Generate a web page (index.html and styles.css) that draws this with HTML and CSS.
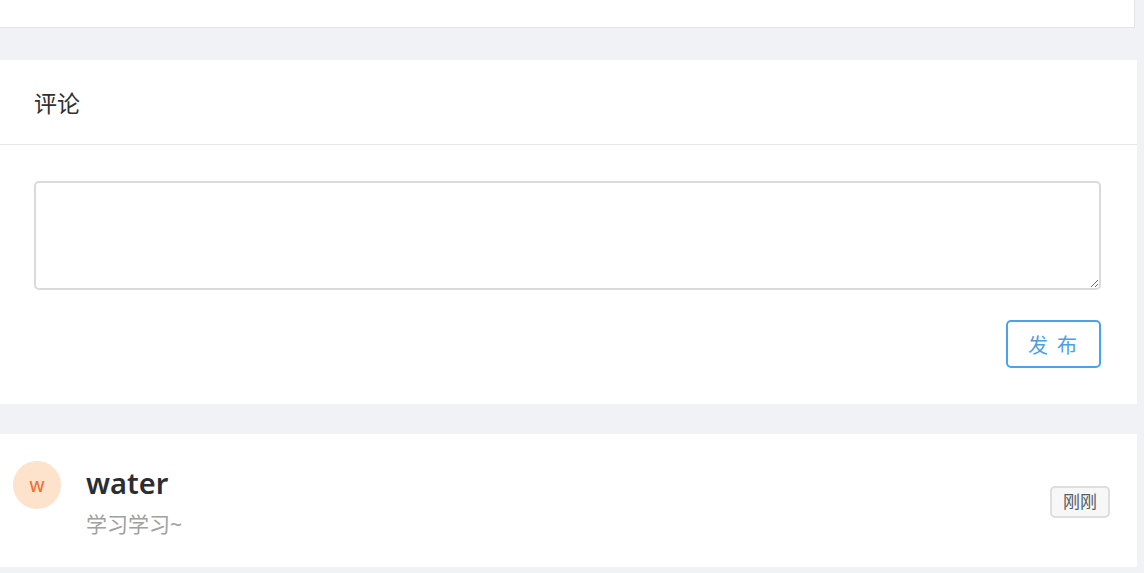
FILE: index.html
```html
<!DOCTYPE html>
<html lang="zh-CN">
<head>
<meta charset="utf-8">
<title>评论</title>
<link rel="stylesheet" href="styles.css">
</head>
<body>
<div class="page">
  <div class="card card-top"></div>

  <section class="card comment-card">
    <div class="comment-header">评论</div>
    <div class="comment-body">
      <textarea class="comment-input"></textarea>
      <div class="actions">
        <button class="publish-btn">发 布</button>
      </div>
    </div>
  </section>

  <section class="card comment-item">
    <div class="avatar">w</div>
    <div class="item-text">
      <div class="item-name">water</div>
      <div class="item-content">学习学习~</div>
    </div>
    <span class="time-tag">刚刚</span>
  </section>
</div>
</body>
</html>
```
FILE: styles.css
```css
html, body {
  margin: 0;
  padding: 0;
  background: #f0f2f5;
  font-family: "Noto Sans", "Noto Sans CJK SC", sans-serif;
}

.page {
  display: flex;
  flex-direction: column;
  width: 1137px;
  height: 573px;
  overflow: hidden;
}

.card {
  background: #ffffff;
}

.card-top {
  width: 1135px;
  height: 28px;
  border-right: 1px solid #e3e4e7;
  border-bottom: 1px solid #e3e4e7;
  box-sizing: border-box;
  margin-bottom: 32px;
}

.comment-card {
  margin-bottom: 30px;
}

.comment-header {
  height: 84px;
  padding-left: 34px;
  display: flex;
  align-items: center;
  font-size: 23px;
  color: #303133;
  border-bottom: 1px solid #e6e6e6;
}

.comment-body {
  padding: 36px 36px 36px 34px;
  display: flex;
  flex-direction: column;
}

.comment-input {
  display: block;
  width: 100%;
  height: 109px;
  box-sizing: border-box;
  border: 2px solid #dadada;
  border-radius: 5px;
  background: #fff;
  resize: vertical;
  margin: 0;
  font-family: inherit;
}

.actions {
  display: flex;
  justify-content: flex-end;
  margin-top: 30px;
}

.publish-btn {
  width: 95px;
  height: 48px;
  box-sizing: border-box;
  border: 2px solid #4aa3ea;
  border-radius: 5px;
  background: #fff;
  color: #4f9ee3;
  font-family: inherit;
  font-size: 20px;
  letter-spacing: 2px;
  padding: 0;
}

.comment-item {
  display: flex;
  align-items: flex-start;
  padding: 27px 27px 27px 13px;
  height: 133px;
  box-sizing: border-box;
}

.avatar {
  width: 48px;
  height: 48px;
  border-radius: 50%;
  background: #fde2cc;
  color: #f26a2b;
  font-size: 19px;
  display: flex;
  align-items: center;
  justify-content: center;
  flex-shrink: 0;
}

.item-text {
  margin-left: 25px;
  margin-top: 2px;
  flex: 1;
  display: flex;
  flex-direction: column;
  gap: 7px;
}

.item-name {
  font-size: 29px;
  font-weight: 600;
  line-height: 40px;
  color: #2b2d31;
}

.item-content {
  font-size: 21px;
  line-height: 28px;
  color: #a0a0a0;
}

.time-tag {
  align-self: center;
  margin-top: 3px;
  height: 32px;
  box-sizing: border-box;
  padding: 0 11px;
  border: 2px solid #dedede;
  border-radius: 5px;
  background: #f7f7f7;
  color: #555a63;
  font-size: 17px;
  line-height: 28px;
}
```
